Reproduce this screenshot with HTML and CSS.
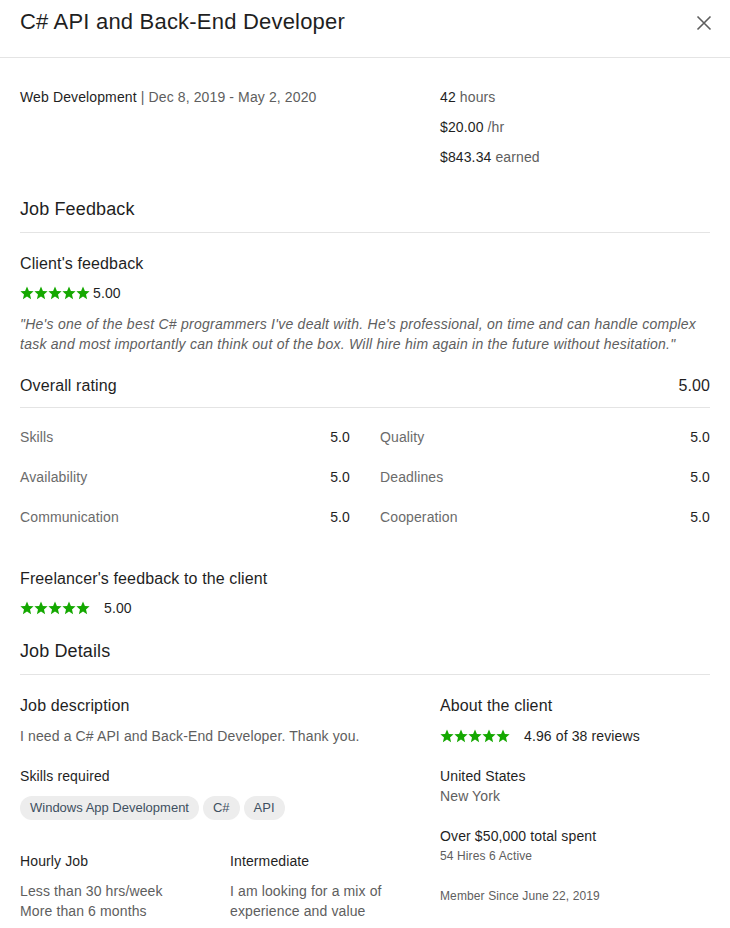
FILE: index.html
```html
<!DOCTYPE html>
<html lang="en">
<head>
<meta charset="utf-8">
<title>C# API and Back-End Developer</title>
<link rel="stylesheet" href="styles.css">
</head>
<body>
<svg width="0" height="0" class="defs" aria-hidden="true">
  <defs>
    <symbol id="star" viewBox="0 0 14 14">
      <polygon points="7,0.6 8.9,5 13.6,5.3 10,8.4 11.1,13.2 7,10.6 2.9,13.2 4,8.4 0.4,5.3 5.1,5"/>
    </symbol>
  </defs>
</svg>
<div class="modal">
  <header class="modal-header">
    <h1 class="modal-title">C# API and Back-End Developer</h1>
    <button class="close" aria-label="Close">
      <svg width="16" height="16" viewBox="0 0 16 16"><path d="M1.5 1.5 L14.5 14.5 M14.5 1.5 L1.5 14.5" stroke="#5e5e5e" stroke-width="1.6" fill="none"/></svg>
    </button>
  </header>

  <div class="modal-body">
    <section class="two-col summary">
      <div class="line"><span class="dark">Web Development</span> | Dec 8, 2019 - May 2, 2020</div>
      <div class="stack">
        <div class="line"><span class="dark">42</span> hours</div>
        <div class="line"><span class="dark">$20.00</span> /hr</div>
        <div class="line"><span class="dark">$843.34</span> earned</div>
      </div>
    </section>

    <h2 class="section-title">Job Feedback</h2>

    <h3 class="sub-title client-fb">Client's feedback</h3>
    <div class="rating-row gap-sm">
      <svg class="stars" width="70" height="14" viewBox="0 0 70 14"><use href="#star" x="0" width="14" height="14"/><use href="#star" x="14" width="14" height="14"/><use href="#star" x="28" width="14" height="14"/><use href="#star" x="42" width="14" height="14"/><use href="#star" x="56" width="14" height="14"/></svg>
      <span class="dark">5.00</span>
    </div>
    <p class="quote">"He's one of the best C# programmers I've dealt with. He's professional, on time and can handle complex task and most importantly can think out of the box. Will hire him again in the future without hesitation."</p>

    <div class="overall">
      <span>Overall rating</span>
      <span>5.00</span>
    </div>

    <div class="score-grid">
      <div class="score"><span class="label">Skills</span><span class="val">5.0</span></div>
      <div class="score"><span class="label">Quality</span><span class="val">5.0</span></div>
      <div class="score"><span class="label">Availability</span><span class="val">5.0</span></div>
      <div class="score"><span class="label">Deadlines</span><span class="val">5.0</span></div>
      <div class="score"><span class="label">Communication</span><span class="val">5.0</span></div>
      <div class="score"><span class="label">Cooperation</span><span class="val">5.0</span></div>
    </div>

    <h3 class="sub-title freelancer-fb">Freelancer's feedback to the client</h3>
    <div class="rating-row gap-lg">
      <svg class="stars" width="70" height="14" viewBox="0 0 70 14"><use href="#star" x="0" width="14" height="14"/><use href="#star" x="14" width="14" height="14"/><use href="#star" x="28" width="14" height="14"/><use href="#star" x="42" width="14" height="14"/><use href="#star" x="56" width="14" height="14"/></svg>
      <span class="dark">5.00</span>
    </div>

    <h2 class="section-title details-title">Job Details</h2>

    <section class="two-col details">
      <div class="col">
        <h3 class="sub-title">Job description</h3>
        <p class="text">I need a C# API and Back-End Developer. Thank you.</p>
        <h4 class="small-title">Skills required</h4>
        <div class="chips">
          <span class="chip">Windows App Development</span>
          <span class="chip">C#</span>
          <span class="chip">API</span>
        </div>
        <div class="job-meta">
          <div>
            <h4 class="small-title">Hourly Job</h4>
            <p class="text">Less than 30 hrs/week<br>More than 6 months</p>
          </div>
          <div>
            <h4 class="small-title">Intermediate</h4>
            <p class="text">I am looking for a mix of<br>experience and value</p>
          </div>
        </div>
      </div>
      <div class="col">
        <h3 class="sub-title">About the client</h3>
        <div class="rating-row gap-lg client-rating">
          <svg class="stars" width="70" height="14" viewBox="0 0 70 14"><use href="#star" x="0" width="14" height="14"/><use href="#star" x="14" width="14" height="14"/><use href="#star" x="28" width="14" height="14"/><use href="#star" x="42" width="14" height="14"/><use href="#star" x="56" width="14" height="14"/></svg>
          <span class="dark">4.96 of 38 reviews</span>
        </div>
        <div class="client-block">
          <div class="dark line">United States</div>
          <div class="line">New York</div>
        </div>
        <div class="client-block">
          <div class="dark line">Over $50,000 total spent</div>
          <div class="line small">54 Hires 6 Active</div>
        </div>
        <div class="client-block">
          <div class="line small">Member Since June 22, 2019</div>
        </div>
      </div>
    </section>
  </div>
</div>
</body>
</html>
```

FILE: styles.css
```css
* { box-sizing: border-box; }

html, body {
  margin: 0;
  padding: 0;
  background: #ffffff;
}

body {
  font-family: "Liberation Sans", Arial, sans-serif;
  color: #5e5e5e;
  font-size: 14px;
  line-height: 20px;
  letter-spacing: 0.12px;
}

.defs { position: absolute; width: 0; height: 0; overflow: hidden; }

h1, h2, h3, h4, p { margin: 0; font-weight: 400; }

.modal { width: 730px; }

.modal-header {
  display: flex;
  justify-content: space-between;
  align-items: flex-start;
  padding: 8px 18px 21px 20px;
  border-bottom: 1px solid #e4e4e4;
}

.modal-title {
  font-size: 22px;
  line-height: 28px;
  color: #1f1f1f;
  letter-spacing: 0.2px;
}

.close {
  border: 0;
  background: none;
  padding: 0;
  margin-top: 7px;
  width: 16px;
  height: 16px;
  display: flex;
  cursor: pointer;
}

.modal-body {
  padding: 29px 20px 20px 20px;
}

.dark { color: #1f1f1f; }

.two-col {
  display: grid;
  grid-template-columns: 400px 1fr;
  column-gap: 20px;
}

.stack {
  display: flex;
  flex-direction: column;
  gap: 10px;
}

.section-title {
  font-size: 18px;
  line-height: 26px;
  color: #1f1f1f;
  margin-top: 29px;
  padding-bottom: 10px;
  border-bottom: 1px solid #e4e4e4;
}

.sub-title {
  font-size: 16px;
  line-height: 24px;
  color: #1f1f1f;
}

.client-fb { margin-top: 19px; }

.rating-row {
  display: flex;
  align-items: center;
  margin-top: 7px;
  height: 20px;
}
.gap-sm { gap: 3px; }
.gap-lg { gap: 14px; }

.stars { fill: #14a800; display: block; }

.quote {
  margin-top: 11px;
  font-style: italic;
  color: #5e5e5e;
  letter-spacing: 0.25px;
}

.overall {
  display: flex;
  justify-content: space-between;
  margin-top: 20px;
  font-size: 16px;
  line-height: 24px;
  color: #1f1f1f;
  padding-bottom: 9px;
  border-bottom: 1px solid #e4e4e4;
}

.score-grid {
  display: grid;
  grid-template-columns: 330px 330px;
  column-gap: 30px;
  row-gap: 20px;
  margin-top: 19px;
}

.score {
  display: flex;
  justify-content: space-between;
}
.score .label { color: #6b6b6b; }
.score .val { color: #1f1f1f; }

.freelancer-fb { margin-top: 40px; }

.details-title { margin-top: 20px; }

.details { margin-top: 19px; }

.col { display: flex; flex-direction: column; }

.text { margin-top: 10px; color: #5e5e5e; }

.sub-title + .text { margin-top: 8px; }

.small-title {
  font-size: 14px;
  line-height: 20px;
  color: #1f1f1f;
  margin-top: 20px;
}

.chips {
  display: flex;
  gap: 4px;
  margin-top: 10px;
}

.chip {
  background: #ededed;
  color: #3f5061;
  border-radius: 12px;
  height: 24px;
  line-height: 24px;
  font-size: 13px;
  letter-spacing: 0;
  padding: 0 10px;
}

.job-meta {
  display: grid;
  grid-template-columns: 210px 1fr;
  margin-top: 11px;
}

.client-rating { margin-top: 8px; }

.client-block { margin-top: 20px; }

.small { font-size: 12px; }
```
